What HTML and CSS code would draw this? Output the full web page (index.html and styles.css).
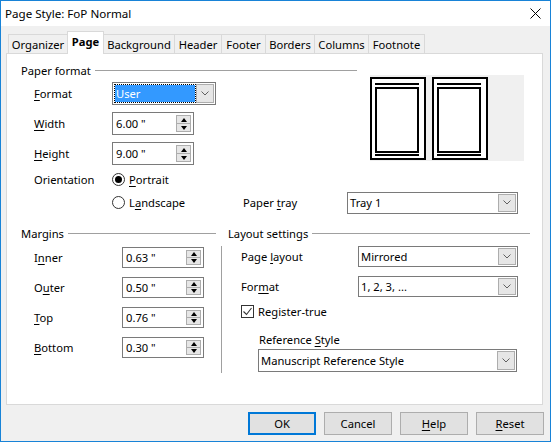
FILE: index.html
```html
<!DOCTYPE html>
<html>
<head>
<meta charset="utf-8">
<link rel="stylesheet" href="styles.css">
</head>
<body>
<div class="window">
  <div class="titlebar">
    <span class="title">Page Style: FoP Normal</span>
    <svg class="close" width="11" height="11" viewBox="0 0 11 11"><path d="M0.5 0.5 L10.5 10.5 M10.5 0.5 L0.5 10.5" stroke="#000" stroke-width="1" fill="none"/></svg>
  </div>
  <div class="body">
    <div class="tabs">
      <div class="tab w-org">Organizer</div>
      <div class="tab sel w-page">Page</div>
      <div class="tab w-bg">Background</div>
      <div class="tab w-head">Header</div>
      <div class="tab w-foot">Footer</div>
      <div class="tab w-bord">Borders</div>
      <div class="tab w-col">Columns</div>
      <div class="tab w-fn">Footnote</div>
    </div>
    <div class="panel">
      <div class="paper">
        <div class="paper-left">
          <div class="ghead"><span>Paper format</span><i class="gline"></i></div>
          <div class="row first">
            <span class="lbl l78"><u>F</u>ormat</span>
            <div class="combo w103 focus">
              <div class="val sel-val"><span>User</span></div>
              <div class="dbtn"><svg width="8" height="5" viewBox="0 0 8 5"><path d="M0.5 0.5 L4 4 L7.5 0.5" stroke="#606060" fill="none"/></svg></div>
            </div>
          </div>
          <div class="row">
            <span class="lbl l78"><u>W</u>idth</span>
            <div class="spin"><span class="val">6.00 "</span><div class="arrows"><div class="up"></div><div class="dn"></div></div></div>
          </div>
          <div class="row">
            <span class="lbl l78"><u>H</u>eight</span>
            <div class="spin"><span class="val">9.00 "</span><div class="arrows"><div class="up"></div><div class="dn"></div></div></div>
          </div>
        </div>
        <div class="preview">
          <svg class="pg" width="56" height="83" viewBox="0 0 56 83"><rect x="1" y="1" width="54" height="81" fill="#fff" stroke="#000" stroke-width="2"/><path d="M5 7 H49 M5 78 H49" stroke="#000" stroke-width="2"/><rect x="6" y="11" width="42" height="64" fill="none" stroke="#000" stroke-width="2"/></svg>
          <svg class="pg" width="56" height="83" viewBox="0 0 56 83"><rect x="1" y="1" width="54" height="81" fill="#fff" stroke="#000" stroke-width="2"/><path d="M5 7 H49 M5 78 H49" stroke="#000" stroke-width="2"/><rect x="6" y="11" width="42" height="64" fill="none" stroke="#000" stroke-width="2"/></svg>
        </div>
      </div>
      <div class="row orient">
        <span class="lbl l78">Orientation</span>
        <span class="radio on"></span><span class="rtext"><u>P</u>ortrait</span>
      </div>
      <div class="row land">
        <span class="lbl l78"></span>
        <span class="radio"></span><span class="rtext w114">L<u>a</u>ndscape</span>
        <span class="lbl l104">Paper <u>t</u>ray</span>
        <div class="combo w171">
          <div class="val"><span>Tray 1</span></div>
          <div class="dbtn"><svg width="8" height="5" viewBox="0 0 8 5"><path d="M0.5 0.5 L4 4 L7.5 0.5" stroke="#606060" fill="none"/></svg></div>
        </div>
      </div>
      <div class="lower">
        <div class="margins">
          <div class="ghead"><span>Margins</span><i class="gline"></i></div>
          <div class="row first2">
            <span class="lbl l88">I<u>n</u>ner</span>
            <div class="spin s22"><span class="val">0.63 "</span><div class="arrows"><div class="up"></div><div class="dn"></div></div></div>
          </div>
          <div class="row r8">
            <span class="lbl l88">O<u>u</u>ter</span>
            <div class="spin s22"><span class="val">0.50 "</span><div class="arrows"><div class="up"></div><div class="dn"></div></div></div>
          </div>
          <div class="row r8">
            <span class="lbl l88"><u>T</u>op</span>
            <div class="spin s22"><span class="val">0.76 "</span><div class="arrows"><div class="up"></div><div class="dn"></div></div></div>
          </div>
          <div class="row r8">
            <span class="lbl l88"><u>B</u>ottom</span>
            <div class="spin s22"><span class="val">0.30 "</span><div class="arrows"><div class="up"></div><div class="dn"></div></div></div>
          </div>
        </div>
        <div class="layout">
          <div class="ghead lh"><span>Layout settings</span><i class="gline"></i></div>
          <div class="lbody">
            <div class="row lfirst">
              <span class="lbl l117">Page <u>l</u>ayout</span>
              <div class="combo w160">
                <div class="val"><span>Mirrored</span></div>
                <div class="dbtn"><svg width="8" height="5" viewBox="0 0 8 5"><path d="M0.5 0.5 L4 4 L7.5 0.5" stroke="#606060" fill="none"/></svg></div>
              </div>
            </div>
            <div class="row r8">
              <span class="lbl l117">For<u>m</u>at</span>
              <div class="combo w160">
                <div class="val"><span>1, 2, 3, ...</span></div>
                <div class="dbtn"><svg width="8" height="5" viewBox="0 0 8 5"><path d="M0.5 0.5 L4 4 L7.5 0.5" stroke="#606060" fill="none"/></svg></div>
              </div>
            </div>
            <div class="row chk">
              <span class="check"><svg width="11" height="11" viewBox="0 0 11 11"><path d="M1.5 5.5 L4.5 8.5 L9.5 2" stroke="#333" stroke-width="1.1" fill="none"/></svg></span>
              <span class="rtext">Re<u>g</u>ister-true</span>
            </div>
            <div class="reflbl">Reference <u>S</u>tyle</div>
            <div class="combo w259 refc">
              <div class="val"><span>Manuscript Reference Style</span></div>
              <div class="dbtn"><svg width="8" height="5" viewBox="0 0 8 5"><path d="M0.5 0.5 L4 4 L7.5 0.5" stroke="#606060" fill="none"/></svg></div>
            </div>
          </div>
        </div>
      </div>
    </div>
    <div class="buttons">
      <div class="button def">OK</div>
      <div class="button">Cancel</div>
      <div class="button"><u>H</u>elp</div>
      <div class="button"><u>R</u>eset</div>
    </div>
  </div>
</div>
</body>
</html>
```
FILE: styles.css
```css
* { box-sizing: border-box; }
html, body { margin: 0; padding: 0; background: #fff; }
body {
  font-family: "Noto Sans", "Open Sans", sans-serif;
  font-size: 11.2px;
  color: #000;
}
u { text-decoration: underline; text-underline-offset: 2px; }

.window {
  width: 551px;
  height: 442px;
  border: 1px solid #1883d7;
  background: #f0f0f0;
  display: flex;
  flex-direction: column;
}
.titlebar {
  height: 25px;
  background: #fff;
  display: flex;
  align-items: center;
  justify-content: space-between;
  padding: 0 9px 0 4px;
  font-size: 11.6px;
}
.close { display: block; margin-top: 0px; }

.body {
  flex: 1;
  padding: 5px 7px 0 5px;
  display: flex;
  flex-direction: column;
}

.tabs {
  display: flex;
  align-items: flex-end;
  height: 22px;
  margin-left: 2px;
}
.tab {
  height: 19px;
  border: 1px solid #d9d9d9;
  border-bottom: none;
  background: #f0f0f0;
  margin-left: -1px;
  display: flex;
  align-items: center;
  justify-content: center;
  white-space: nowrap;
}
.tab:first-child { margin-left: 0; }
.tab.sel {
  height: 23px;
  margin-bottom: -1px;
  background: #fff;
  font-weight: bold;
  position: relative;
  z-index: 1;
  padding-bottom: 3px;
}
.w-org { width: 60px; }
.w-page { width: 37px; }
.w-bg { width: 72px; }
.w-head { width: 48px; }
.w-foot { width: 45px; }
.w-bord { width: 50px; }
.w-col { width: 55px; }
.w-fn { width: 57px; }

.panel {
  height: 352px;
  background: #fff;
  border: 1px solid #d9d9d9;
  padding: 8px 0 0 14px;
}

.ghead {
  display: flex;
  align-items: center;
  height: 16px;
  white-space: nowrap;
}
.gline {
  flex: 1;
  height: 1px;
  background: #a0a0a0;
  margin-left: 4px;
}

.paper { display: flex; }
.paper-left { width: 336px; }
.preview {
  margin: 13px 0 0 13px;
  width: 154px;
  height: 86px;
  background: #f0f0f0;
  padding-top: 2px;
  display: flex;
  gap: 6px;
  align-items: flex-start;
}
.pg { display: block; }

.row {
  display: flex;
  align-items: center;
  height: 23px;
  margin-top: 7px;
  padding-left: 13px;
  white-space: nowrap;
}
.row.first { margin-top: 4px; }
.lbl { display: inline-block; }
.l78 { width: 78px; }
.l88 { width: 88px; }
.l104 { width: 104px; }
.l117 { width: 117px; }

.combo {
  height: 23px;
  border: 1px solid #7a7a7a;
  background: #fff;
  display: flex;
  align-items: stretch;
}
.w103 { width: 104px; }
.w171 { width: 171px; height: 22px; }
.w160 { width: 160px; height: 21px; }
.w259 { width: 259px; height: 23px; }
.combo .val {
  flex: 1;
  display: flex;
  align-items: center;
  padding-left: 2px;
}
.combo.focus .val {
  margin: 2px 0 2px 2px;
  padding-left: 1px;
  background: #3399ff;
  color: #fff;
  outline: 1px dotted #000;
}
.dbtn {
  width: 18px;
  margin: 1px;
  background: #e6e6e6;
  border: 1px solid #adadad;
  display: flex;
  align-items: center;
  justify-content: center;
}

.spin {
  width: 82px;
  height: 23px;
  border: 1px solid #7a7a7a;
  background: #fff;
  display: flex;
  align-items: center;
}
.spin.s22 { height: 21px; }
.spin .val { flex: 1; padding-left: 3px; }
.arrows {
  width: 15px;
  height: 17px;
  margin-right: 2px;
  border: 1px solid #adadad;
  background: #e6e6e6;
  display: flex;
  flex-direction: column;
}
.spin.s22 .arrows { height: 15px; }
.arrows .up, .arrows .dn {
  flex: 1;
  display: flex;
  align-items: center;
  justify-content: center;
}
.arrows .up { border-bottom: 1px solid #adadad; }
.arrows .up::before {
  content: "";
  border-left: 3.5px solid transparent;
  border-right: 3.5px solid transparent;
  border-bottom: 4px solid #000;
}
.arrows .dn::before {
  content: "";
  border-left: 3.5px solid transparent;
  border-right: 3.5px solid transparent;
  border-top: 4px solid #000;
}

.row.orient { margin-top: 3px; }
.row.land { margin-top: 0; }
.radio {
  width: 13px;
  height: 13px;
  border: 1px solid #333;
  border-radius: 50%;
  background: #fff;
  display: inline-flex;
  align-items: center;
  justify-content: center;
  margin-right: 4px;
}
.radio.on::before {
  content: "";
  width: 7px;
  height: 7px;
  border-radius: 50%;
  background: #000;
}
.rtext { display: inline-block; }
.w114 { width: 114px; }

.lower {
  display: flex;
  margin-top: 11px;
}
.margins { width: 195px; }
.row.first2 { margin-top: 6px; height: 21px; }
.row.r8 { margin-top: 9px; height: 21px; }

.layout {
  width: 309px;
  margin-left: 5px;
}
.ghead.lh { padding-left: 7px; }
.lbody {
  margin-top: 5px;
  border-left: 1px solid #a0a0a0;
  padding-left: 6px;
  padding-bottom: 1px;
}
.lbody .row { padding-left: 13px; }
.row.lfirst { margin-top: 1px; height: 21px; }
.row.chk { margin-top: 3px; height: 22px; padding-left: 13px; }
.check {
  width: 13px;
  height: 13px;
  border: 1px solid #333;
  background: #fff;
  display: inline-flex;
  align-items: center;
  justify-content: center;
  margin-right: 4px;
}
.check svg { display: block; }
.reflbl {
  margin-top: 10px;
  height: 16px;
  line-height: 16px;
  padding-left: 31px;
}
.refc { margin-left: 30px; margin-top: 1px; }

.buttons {
  display: flex;
  justify-content: flex-end;
  gap: 8px;
  margin-top: 7px;
  margin-right: -1px;
}
.button {
  width: 68px;
  height: 23px;
  background: #e1e1e1;
  border: 1px solid #adadad;
  display: flex;
  align-items: center;
  justify-content: center;
}
.button.def { border: 2px solid #0078d7; }
```
